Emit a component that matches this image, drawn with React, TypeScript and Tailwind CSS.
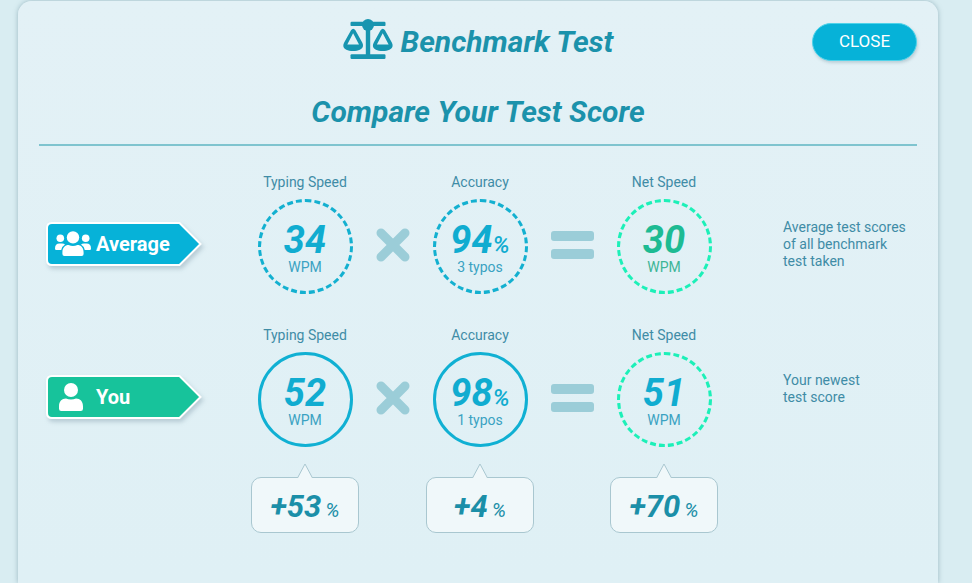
import type { ReactNode } from "react";

const display = "font-['Roboto','Liberation_Sans',sans-serif] font-bold italic";
const columns = "grid grid-cols-[212fr_108px_67fr_108px_76fr_108px_199fr] items-start";

function ScaleIcon() {
  return (
    <svg className="h-10 w-[50px] shrink-0" viewBox="0 0 50 40" fill="#1795b0" aria-hidden="true">
      <rect x="7.5" y="2.7" width="35" height="4.4" rx="1.2" />
      <circle cx="25" cy="6" r="6" />
      <rect x="22.8" y="6" width="4.4" height="31" />
      <rect x="7.5" y="35.2" width="35" height="4.8" rx="1.2" />
      <path
        fillRule="evenodd"
        d="M8 11.3Q9 9.8 10.2 9.8T12.4 11.3L19.2 23.6Q20.2 25.4 20 27C19.4 30.2 15.5 32 10.1 32S.8 30.2.3 27Q.2 25.4 1.2 23.6ZM10.1 14.2L4.3 25.6H16Z"
      />
      <path
        fillRule="evenodd"
        d="M37.6 11.3Q38.6 9.8 39.8 9.8T42 11.3L48.8 23.6Q49.8 25.4 49.6 27C49 30.2 45.1 32 39.7 32S30.4 30.2 29.9 27Q29.8 25.4 30.8 23.6ZM39.7 14.2L33.9 25.6H45.6Z"
      />
    </svg>
  );
}

function GroupIcon() {
  return (
    <svg className="h-[26px] w-9" viewBox="0 0 36 26" fill="#fff" aria-hidden="true">
      <circle cx="5.3" cy="7.3" r="3.8" />
      <circle cx="30.7" cy="7.3" r="3.8" />
      <path d="M0 17.5Q0 12.6 4.5 12.6H7Q9 12.6 10 13.6Q6.8 15.6 6.2 19H1.2Q0 19 0 17.5Z" />
      <path d="M36 17.5Q36 12.6 31.5 12.6H29Q27 12.6 26 13.6Q29.2 15.6 29.8 19H34.8Q36 19 36 17.5Z" />
      <circle cx="18" cy="6.4" r="6.2" />
      <path d="M7.4 21.4C7.4 16.6 10 14 13.6 14Q15.8 15 18 15T22.4 14C26 14 28.6 16.6 28.6 21.4V23Q28.6 25 26.6 25H9.4Q7.4 25 7.4 23Z" />
    </svg>
  );
}

function PersonIcon() {
  return (
    <svg className="h-7 w-6" viewBox="0 0 24 28" fill="#fff" aria-hidden="true">
      <circle cx="12" cy="7" r="7" />
      <path d="M0 23.5C0 18.4 2.8 15.6 7 15.6Q9.4 16.6 12 16.6T17 15.6C21.2 15.6 24 18.4 24 23.5V25.8Q24 28 21.8 28H2.2Q0 28 0 25.8Z" />
    </svg>
  );
}

function Tag({ label, tone, icon }: { label: string; tone: string; icon: ReactNode }) {
  return (
    <div className="relative ml-[6px] mt-12 flex h-[46px] w-[158px] items-center pl-[10px]">
      <svg
        className={`absolute inset-0 h-full w-full drop-shadow-[2px_3px_2px_rgba(90,120,140,0.3)] ${tone}`}
        viewBox="0 0 158 46"
        aria-hidden="true"
      >
        <path
          d="M7 2H134.5L155.5 23L134.5 44H7Q2 44 2 39V7Q2 2 7 2Z"
          fill="currentColor"
          stroke="#fff"
          strokeWidth="2"
        />
      </svg>
      <span className="relative flex w-[41px] justify-start">{icon}</span>
      <h3 className="relative text-xl font-bold text-white">{label}</h3>
    </div>
  );
}

interface MeterProps {
  title: string;
  value: string;
  unit?: string;
  note: string;
  ring: string;
  color: string;
  noteColor: string;
}

function Meter({ title, value, unit, note, ring, color, noteColor }: MeterProps) {
  return (
    <div className="flex flex-col items-center">
      <h4 className="text-sm leading-[18px] text-[#3f8ca6]">{title}</h4>
      <div
        className={`mt-2 flex h-[95px] w-[95px] flex-col items-center rounded-full border-[3px] pt-[20px] ${ring}`}
      >
        <p className={`h-9 whitespace-nowrap text-[38px] leading-9 ${display} ${color}`}>
          {value}
          {unit && <span className="text-2xl font-medium leading-none">{unit}</span>}
        </p>
        <p className={`text-sm leading-[18px] ${noteColor}`}>{note}</p>
      </div>
    </div>
  );
}

function Times() {
  return (
    <svg className="mx-auto mt-[55px] h-[34px] w-[34px]" viewBox="0 0 34 34" role="img" aria-label="times">
      <path d="M5 5L29 29M29 5L5 29" stroke="#9bcdd8" strokeWidth="9" strokeLinecap="round" />
    </svg>
  );
}

function Equals() {
  return (
    <div className="mx-auto mt-[58px] flex w-[43px] flex-col gap-2" role="img" aria-label="equals">
      <span className="h-[10px] rounded-[3px] bg-[#9bcdd8]" />
      <span className="h-[10px] rounded-[3px] bg-[#9bcdd8]" />
    </div>
  );
}

function Callout({ value }: { value: string }) {
  return (
    <div className="relative flex h-14 items-center justify-center rounded-[10px] border border-[#a9c7d0] bg-[#f0f8fa] pt-1">
      <svg className="absolute -top-[15px] left-[45px] h-4 w-4" viewBox="0 0 16 16" aria-hidden="true">
        <path d="M0 16L8 1L16 16Z" fill="#f0f8fa" />
        <path d="M0.5 15L8 1L15.5 15" fill="none" stroke="#a9c7d0" />
      </svg>
      <p className="text-[#1b8fa8]">
        <span className={`text-[31px] leading-9 ${display}`}>{value}</span>
        <span className="ml-1 text-xl italic leading-none">%</span>
      </p>
    </div>
  );
}

const blueText = { color: "text-[#10acd0]", noteColor: "text-[#3aa2c2]" };
const greenText = { color: "text-[#1dbb93]", noteColor: "text-[#3db596]" };
const dashedBlue = "border-dashed border-[#13b0d0]";
const solidBlue = "border-solid border-[#10b0d3]";
const dashedGreen = "border-dashed border-[#1cf0b8]";

export default function App() {
  return (
    <div className="flex min-h-screen bg-[#d9edf2] pl-[18px] pr-[34px] pt-px font-['Roboto','Liberation_Sans',sans-serif]">
      <main className="min-w-0 flex-1 rounded-t-[14px] bg-linear-to-b from-[#e3f1f6] to-[#dff0f5] px-[21px] pb-12 pt-[18px] shadow-[0_0_5px_rgba(90,130,145,0.5)]">
        <header className="grid grid-cols-[1fr_auto_1fr] items-start">
          <h1 className={`col-start-2 flex items-start gap-2 text-3xl/10 text-[#1b92ab] ${display}`}>
            <ScaleIcon />
            <span className="pt-[3px]">Benchmark Test</span>
          </h1>
          <button
            type="button"
            className="mt-1 h-[38px] w-[105px] justify-self-end rounded-full border border-[#4fd3ea] bg-[#06b2d8] text-[17px] text-white shadow-[1px_2px_3px_rgba(70,110,130,0.25)]"
          >
            CLOSE
          </button>
        </header>

        <h2
          className={`mt-[30px] border-b-2 border-[#7fc4cf] pb-3 text-center text-3xl/10 text-[#1b92ab] ${display}`}
        >
          Compare Your Test Score
        </h2>

        <section className={`mt-[27px] ${columns}`}>
          <Tag label="Average" tone="text-[#06b2d8]" icon={<GroupIcon />} />
          <Meter title="Typing Speed" value="34" note="WPM" ring={dashedBlue} {...blueText} />
          <Times />
          <Meter title="Accuracy" value="94" unit="%" note="3 typos" ring={dashedBlue} {...blueText} />
          <Equals />
          <Meter title="Net Speed" value="30" note="WPM" ring={dashedGreen} {...greenText} />
          <p className="mt-[46px] pl-[65px] text-sm leading-[17px] text-[#3f8ca6]">
            Average test scores
            <br />
            of all benchmark
            <br />
            test taken
          </p>
        </section>

        <section className={`mt-8 ${columns}`}>
          <Tag
            label="You"
            tone="text-[#17c39b]"
            icon={
              <span className="pl-1">
                <PersonIcon />
              </span>
            }
          />
          <Meter title="Typing Speed" value="52" note="WPM" ring={solidBlue} {...blueText} />
          <Times />
          <Meter title="Accuracy" value="98" unit="%" note="1 typos" ring={solidBlue} {...blueText} />
          <Equals />
          <Meter title="Net Speed" value="51" note="WPM" ring={dashedGreen} {...blueText} />
          <p className="mt-[46px] pl-[65px] text-sm leading-[17px] text-[#3f8ca6]">
            Your newest
            <br />
            test score
          </p>
        </section>

        <section className={`mt-[30px] ${columns}`} aria-label="Difference from average">
          <div className="col-start-2">
            <Callout value="+53" />
          </div>
          <div className="col-start-4">
            <Callout value="+4" />
          </div>
          <div className="col-start-6">
            <Callout value="+70" />
          </div>
        </section>
      </main>
    </div>
  );
}
